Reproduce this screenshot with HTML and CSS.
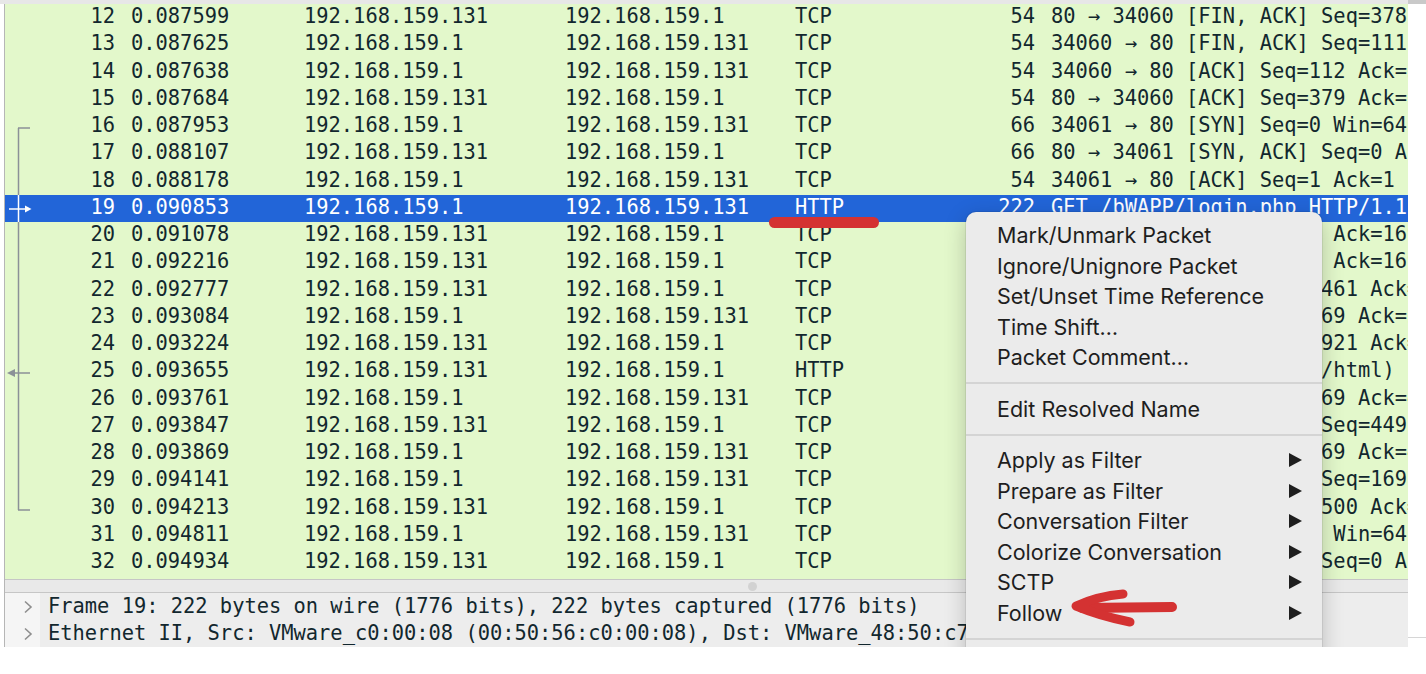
FILE: index.html
```html
<!DOCTYPE html>
<html>
<head>
<meta charset="utf-8">
<link rel="stylesheet" href="styles.css">
</head>
<body>
<div class="window">
  <div class="topstrip"><div class="ts-main"></div><div class="ts-side"></div></div>
  <div class="main">
    <div class="panes">
      <div class="list">
        <div class="row"><span class="no">12</span><span class="time">0.087599</span><span>192.168.159.131</span><span>192.168.159.1</span><span>TCP</span><span class="len">54</span><span class="info">80 → 34060 [FIN, ACK] Seq=378 Ack=112 Win=64128 Len=0</span></div>
        <div class="row"><span class="no">13</span><span class="time">0.087625</span><span>192.168.159.1</span><span>192.168.159.131</span><span>TCP</span><span class="len">54</span><span class="info">34060 → 80 [FIN, ACK] Seq=111 Ack=379 Win=64128 Len=0</span></div>
        <div class="row"><span class="no">14</span><span class="time">0.087638</span><span>192.168.159.1</span><span>192.168.159.131</span><span>TCP</span><span class="len">54</span><span class="info">34060 → 80 [ACK] Seq=112 Ack=379 Win=64128 Len=0</span></div>
        <div class="row"><span class="no">15</span><span class="time">0.087684</span><span>192.168.159.131</span><span>192.168.159.1</span><span>TCP</span><span class="len">54</span><span class="info">80 → 34060 [ACK] Seq=379 Ack=112 Win=64128 Len=0</span></div>
        <div class="row"><span class="no">16</span><span class="time">0.087953</span><span>192.168.159.1</span><span>192.168.159.131</span><span>TCP</span><span class="len">66</span><span class="info">34061 → 80 [SYN] Seq=0 Win=64240 Len=0 MSS=1460</span></div>
        <div class="row"><span class="no">17</span><span class="time">0.088107</span><span>192.168.159.131</span><span>192.168.159.1</span><span>TCP</span><span class="len">66</span><span class="info">80 → 34061 [SYN, ACK] Seq=0 Ack=1 Win=65160 Len=0</span></div>
        <div class="row"><span class="no">18</span><span class="time">0.088178</span><span>192.168.159.1</span><span>192.168.159.131</span><span>TCP</span><span class="len">54</span><span class="info">34061 → 80 [ACK] Seq=1 Ack=1</span></div>
        <div class="row sel"><span class="no">19</span><span class="time">0.090853</span><span>192.168.159.1</span><span>192.168.159.131</span><span>HTTP</span><span class="len">222</span><span class="info">GET /bWAPP/login.php HTTP/1.1</span></div>
        <div class="row"><span class="no">20</span><span class="time">0.091078</span><span>192.168.159.131</span><span>192.168.159.1</span><span>TCP</span><span class="len">54</span><span class="info">80 → 34061 [ACK] Seq=1 Ack=169 Win=64128 Len=0</span></div>
        <div class="row"><span class="no">21</span><span class="time">0.092216</span><span>192.168.159.131</span><span>192.168.159.1</span><span>TCP</span><span class="len">1514</span><span class="info">80 → 34061 [ACK] Seq=1 Ack=169 Win=64128 Len=1460</span></div>
        <div class="row"><span class="no">22</span><span class="time">0.092777</span><span>192.168.159.131</span><span>192.168.159.1</span><span>TCP</span><span class="len">1514</span><span class="info">80 → 34061 [ACK] Seq=1461 Ack=169 Win=64128 Len=1460</span></div>
        <div class="row"><span class="no">23</span><span class="time">0.093084</span><span>192.168.159.1</span><span>192.168.159.131</span><span>TCP</span><span class="len">54</span><span class="info">34061 → 80 [ACK] Seq=169 Ack=2921 Win=63488 Len=0</span></div>
        <div class="row"><span class="no">24</span><span class="time">0.093224</span><span>192.168.159.131</span><span>192.168.159.1</span><span>TCP</span><span class="len">1514</span><span class="info">80 → 34061 [ACK] Seq=2921 Ack=169 Win=64128 Len=1460</span></div>
        <div class="row"><span class="no">25</span><span class="time">0.093655</span><span>192.168.159.131</span><span>192.168.159.1</span><span>HTTP</span><span class="len">165</span><span class="info">HTTP/1.1 200 OK  (text/html)</span></div>
        <div class="row"><span class="no">26</span><span class="time">0.093761</span><span>192.168.159.1</span><span>192.168.159.131</span><span>TCP</span><span class="len">54</span><span class="info">34061 → 80 [ACK] Seq=169 Ack=4381 Win=62592 Len=0</span></div>
        <div class="row"><span class="no">27</span><span class="time">0.093847</span><span>192.168.159.131</span><span>192.168.159.1</span><span>TCP</span><span class="len">54</span><span class="info">80 → 34061 [FIN, ACK] Seq=4492 Ack=169 Win=64128 Len=0</span></div>
        <div class="row"><span class="no">28</span><span class="time">0.093869</span><span>192.168.159.1</span><span>192.168.159.131</span><span>TCP</span><span class="len">54</span><span class="info">34061 → 80 [ACK] Seq=169 Ack=4493 Win=62592 Len=0</span></div>
        <div class="row"><span class="no">29</span><span class="time">0.094141</span><span>192.168.159.1</span><span>192.168.159.131</span><span>TCP</span><span class="len">54</span><span class="info">34061 → 80 [FIN, ACK] Seq=169 Ack=4493 Win=62592 Len=0</span></div>
        <div class="row"><span class="no">30</span><span class="time">0.094213</span><span>192.168.159.131</span><span>192.168.159.1</span><span>TCP</span><span class="len">54</span><span class="info">80 → 34061 [ACK] Seq=4500 Ack=170 Win=64128 Len=0</span></div>
        <div class="row"><span class="no">31</span><span class="time">0.094811</span><span>192.168.159.1</span><span>192.168.159.131</span><span>TCP</span><span class="len">66</span><span class="info">34062 → 80 [SYN] Seq=0 Win=64240 Len=0 MSS=1460</span></div>
        <div class="row"><span class="no">32</span><span class="time">0.094934</span><span>192.168.159.131</span><span>192.168.159.1</span><span>TCP</span><span class="len">66</span><span class="info">80 → 34062 [SYN, ACK] Seq=0 Ack=1 Win=65160 Len=0</span></div>
      </div>
      <div class="splitter"><span class="dot"></span></div>
      <div class="details">
        <div class="drow"><span class="gut"><svg width="10" height="14" viewBox="0 0 10 14"><polyline points="2,1.5 8,7 2,12.5" fill="none" stroke="#8e8e8e" stroke-width="1.6"/></svg></span><span class="dtext">Frame 19: 222 bytes on wire (1776 bits), 222 bytes captured (1776 bits)</span></div>
        <div class="drow"><span class="gut"><svg width="10" height="14" viewBox="0 0 10 14"><polyline points="2,1.5 8,7 2,12.5" fill="none" stroke="#8e8e8e" stroke-width="1.6"/></svg></span><span class="dtext">Ethernet II, Src: VMware_c0:00:08 (00:50:56:c0:00:08), Dst: VMware_48:50:c7 (00:0c:29:48:50:c7)</span></div>
      </div>
    </div>
    <div class="rightgap"><div class="rg-line"></div></div>
  </div>

  <svg class="gutter" width="40" height="647" viewBox="0 0 40 647">
    <line x1="18.5" y1="128" x2="18.5" y2="195" stroke="#8b9197" stroke-width="1.5"/>
    <line x1="18.5" y1="195" x2="18.5" y2="222" stroke="#ffffff" stroke-width="1.5"/>
    <line x1="18.5" y1="222" x2="18.5" y2="510" stroke="#8b9197" stroke-width="1.5"/>
    <line x1="18" y1="128" x2="30" y2="128" stroke="#8b9197" stroke-width="1.5"/>
    <line x1="18" y1="510" x2="30" y2="510" stroke="#8b9197" stroke-width="1.5"/>
    <line x1="9" y1="209" x2="26" y2="209" stroke="#ffffff" stroke-width="1.5"/>
    <polygon points="25,205.5 31.5,209 25,212.5" fill="#ffffff"/>
    <line x1="14" y1="373" x2="30" y2="373" stroke="#8b9197" stroke-width="1.5"/>
    <polygon points="7,373 15,369 15,377" fill="#8b9197"/>
  </svg>

  <div class="menu">
    <div class="mi">Mark/Unmark Packet</div>
    <div class="mi">Ignore/Unignore Packet</div>
    <div class="mi">Set/Unset Time Reference</div>
    <div class="mi">Time Shift…</div>
    <div class="mi">Packet Comment…</div>
    <div class="sep"></div>
    <div class="mi">Edit Resolved Name</div>
    <div class="sep"></div>
    <div class="mi">Apply as Filter<svg class="sub" width="13" height="14" viewBox="0 0 13 14"><polygon points="0,0 13,7 0,14" fill="#1e1e1e"/></svg></div>
    <div class="mi">Prepare as Filter<svg class="sub" width="13" height="14" viewBox="0 0 13 14"><polygon points="0,0 13,7 0,14" fill="#1e1e1e"/></svg></div>
    <div class="mi">Conversation Filter<svg class="sub" width="13" height="14" viewBox="0 0 13 14"><polygon points="0,0 13,7 0,14" fill="#1e1e1e"/></svg></div>
    <div class="mi">Colorize Conversation<svg class="sub" width="13" height="14" viewBox="0 0 13 14"><polygon points="0,0 13,7 0,14" fill="#1e1e1e"/></svg></div>
    <div class="mi">SCTP<svg class="sub" width="13" height="14" viewBox="0 0 13 14"><polygon points="0,0 13,7 0,14" fill="#1e1e1e"/></svg></div>
    <div class="mi">Follow<svg class="sub" width="13" height="14" viewBox="0 0 13 14"><polygon points="0,0 13,7 0,14" fill="#1e1e1e"/></svg></div>
    <div class="sep"></div>
    <div class="mi">Copy<svg class="sub" width="13" height="14" viewBox="0 0 13 14"><polygon points="0,0 13,7 0,14" fill="#1e1e1e"/></svg></div>
  </div>

  <svg class="marks" width="1426" height="647" viewBox="0 0 1426 647">
    <rect x="769" y="217" width="110" height="11" rx="5.5" fill="#d43232"/>
    <path d="M1172 607 L1082 608" stroke="#d43232" stroke-width="10" stroke-linecap="round" fill="none"/>
    <path d="M1123 594 Q1098 596 1076 606 Q1100 616 1130 622" stroke="#d43232" stroke-width="9" stroke-linecap="round" stroke-linejoin="round" fill="none"/>
  </svg>
</div>
</body>
</html>
```
FILE: styles.css
```css
html, body {
  margin: 0;
  padding: 0;
  background: #ffffff;
}

.window {
  position: relative;
  width: 1426px;
  height: 647px;
  overflow: hidden;
}

.topstrip {
  display: flex;
  height: 4px;
}
.ts-main {
  width: 1408px;
  background: #e7e7e7;
}
.ts-side {
  flex: 1;
  background: #c9c9c9;
}

.main {
  display: flex;
  height: 643px;
}

.panes {
  width: 1403px;
  margin-left: 4px;
  border-left: 1px solid #b6b6b6;
  display: flex;
  flex-direction: column;
}

.list {
  background: #e3f8cb;
  padding: 0 0 2.75px;
  border-bottom: 1px solid #c6c6c6;
}

.row {
  display: grid;
  grid-template-columns: 110px 189px 261px 230px 150px 90px 1fr;
  height: 27.25px;
  line-height: 24.6px;
  font-family: "DejaVu Sans Mono", monospace;
  font-size: 20.4px;
  color: #12272e;
  white-space: pre;
  overflow: hidden;
}
.row > span {
  overflow: hidden;
}
.row.sel {
  background: #2265d8;
  color: #ffffff;
}
.no {
  text-align: right;
}
.time {
  padding-left: 16px;
}
.len {
  text-align: right;
}
.info {
  padding-left: 16px;
  min-width: 0;
}

.splitter {
  height: 12px;
  background: #e9e9e9;
  border-bottom: 1px solid #c6c6c6;
  display: flex;
  align-items: center;
}
.dot {
  width: 9px;
  height: 9px;
  border-radius: 50%;
  background: #d2d2d2;
  margin-left: 743px;
}

.details {
  flex: 1;
  background: #ededed;
}
.drow {
  display: flex;
  height: 27px;
  line-height: 27px;
  font-family: "DejaVu Sans Mono", monospace;
  font-size: 20.4px;
  color: #12272e;
  white-space: pre;
}
.gut {
  width: 35px;
  flex: none;
  background: #f5f5f5;
  display: flex;
  align-items: center;
  padding-left: 18px;
  box-sizing: border-box;
}
.dtext {
  padding-left: 8px;
  overflow: hidden;
}

.rightgap {
  flex: 1;
  background: #ffffff;
  position: relative;
}
.rg-line {
  margin-top: 633px;
  height: 1px;
  background: #d6d6d6;
}

.gutter {
  position: absolute;
  left: 0;
  top: 0;
}

.menu {
  position: absolute;
  left: 966px;
  top: 212px;
  width: 356px;
  padding-top: 8px;
  background: #ebebeb;
  border-radius: 10px;
  box-shadow: 0 0 0 1px rgba(0, 0, 0, 0.07), 0 6px 22px rgba(0, 0, 0, 0.22);
}
.mi {
  height: 30.5px;
  line-height: 30.5px;
  padding: 0 20px 0 31px;
  display: flex;
  align-items: center;
  justify-content: space-between;
  font-family: "Inter", "Liberation Sans", sans-serif;
  font-size: 21.5px;
  color: #1e1e1e;
  white-space: nowrap;
}
.sep {
  height: 21px;
  display: flex;
  align-items: center;
}
.sep::before {
  content: "";
  display: block;
  width: 100%;
  height: 2px;
  background: #d4d4d4;
}

.marks {
  position: absolute;
  left: 0;
  top: 0;
  pointer-events: none;
}
```
